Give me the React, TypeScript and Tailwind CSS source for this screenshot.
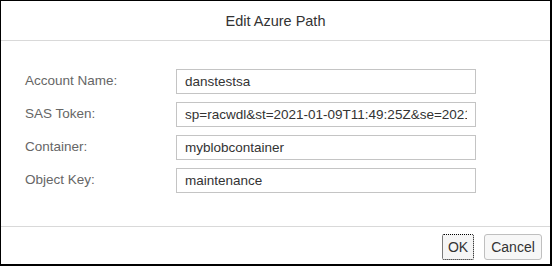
export default function App() {
  const fields = [
    { label: 'Account Name:', value: 'danstestsa' },
    { label: 'SAS Token:', value: 'sp=racwdl&st=2021-01-09T11:49:25Z&se=2021-01-10T11:49:25Z&sv=2019-12-12&sr=c' },
    { label: 'Container:', value: 'myblobcontainer' },
    { label: 'Object Key:', value: 'maintenance' },
  ]

  return (
    <div className="w-[552px] h-[266px] bg-white flex flex-col border-l border-t border-r-2 border-b-2 border-black font-['Liberation_Sans',Arial,sans-serif]">
      <div className="h-[40px] flex items-center justify-center pt-[3px] border-b border-[#d9d9d9] text-[14.5px] text-[#333]">
        Edit Azure Path
      </div>
      <div className="flex-1 flex flex-col gap-[8px] pt-[28px] pl-[24px]">
        {fields.map(f => (
          <div key={f.label} className="flex items-center h-[25px]">
            <label className="w-[151px] text-[13.5px] text-[#666]">{f.label}</label>
            <input
              type="text"
              readOnly
              value={f.value}
              className="w-[300px] h-[25px] border border-[#c4c4c4] px-[8px] text-[13.5px] text-[#333] outline-none bg-white"
            />
          </div>
        ))}
      </div>
      <div className="h-[38px] border-t border-[#d9d9d9] flex items-start justify-end gap-[10px] pt-[7px] pr-[8px]">
        <button className="w-[32px] h-[26px] text-[14px] text-[#333] bg-[#f5f5f5] border border-dotted border-black rounded-[2px]">
          OK
        </button>
        <button className="w-[58px] h-[26px] text-[14px] text-[#333] bg-[#f7f7f7] border border-[#bfbfbf] rounded-[3px]">
          Cancel
        </button>
      </div>
    </div>
  )
}
